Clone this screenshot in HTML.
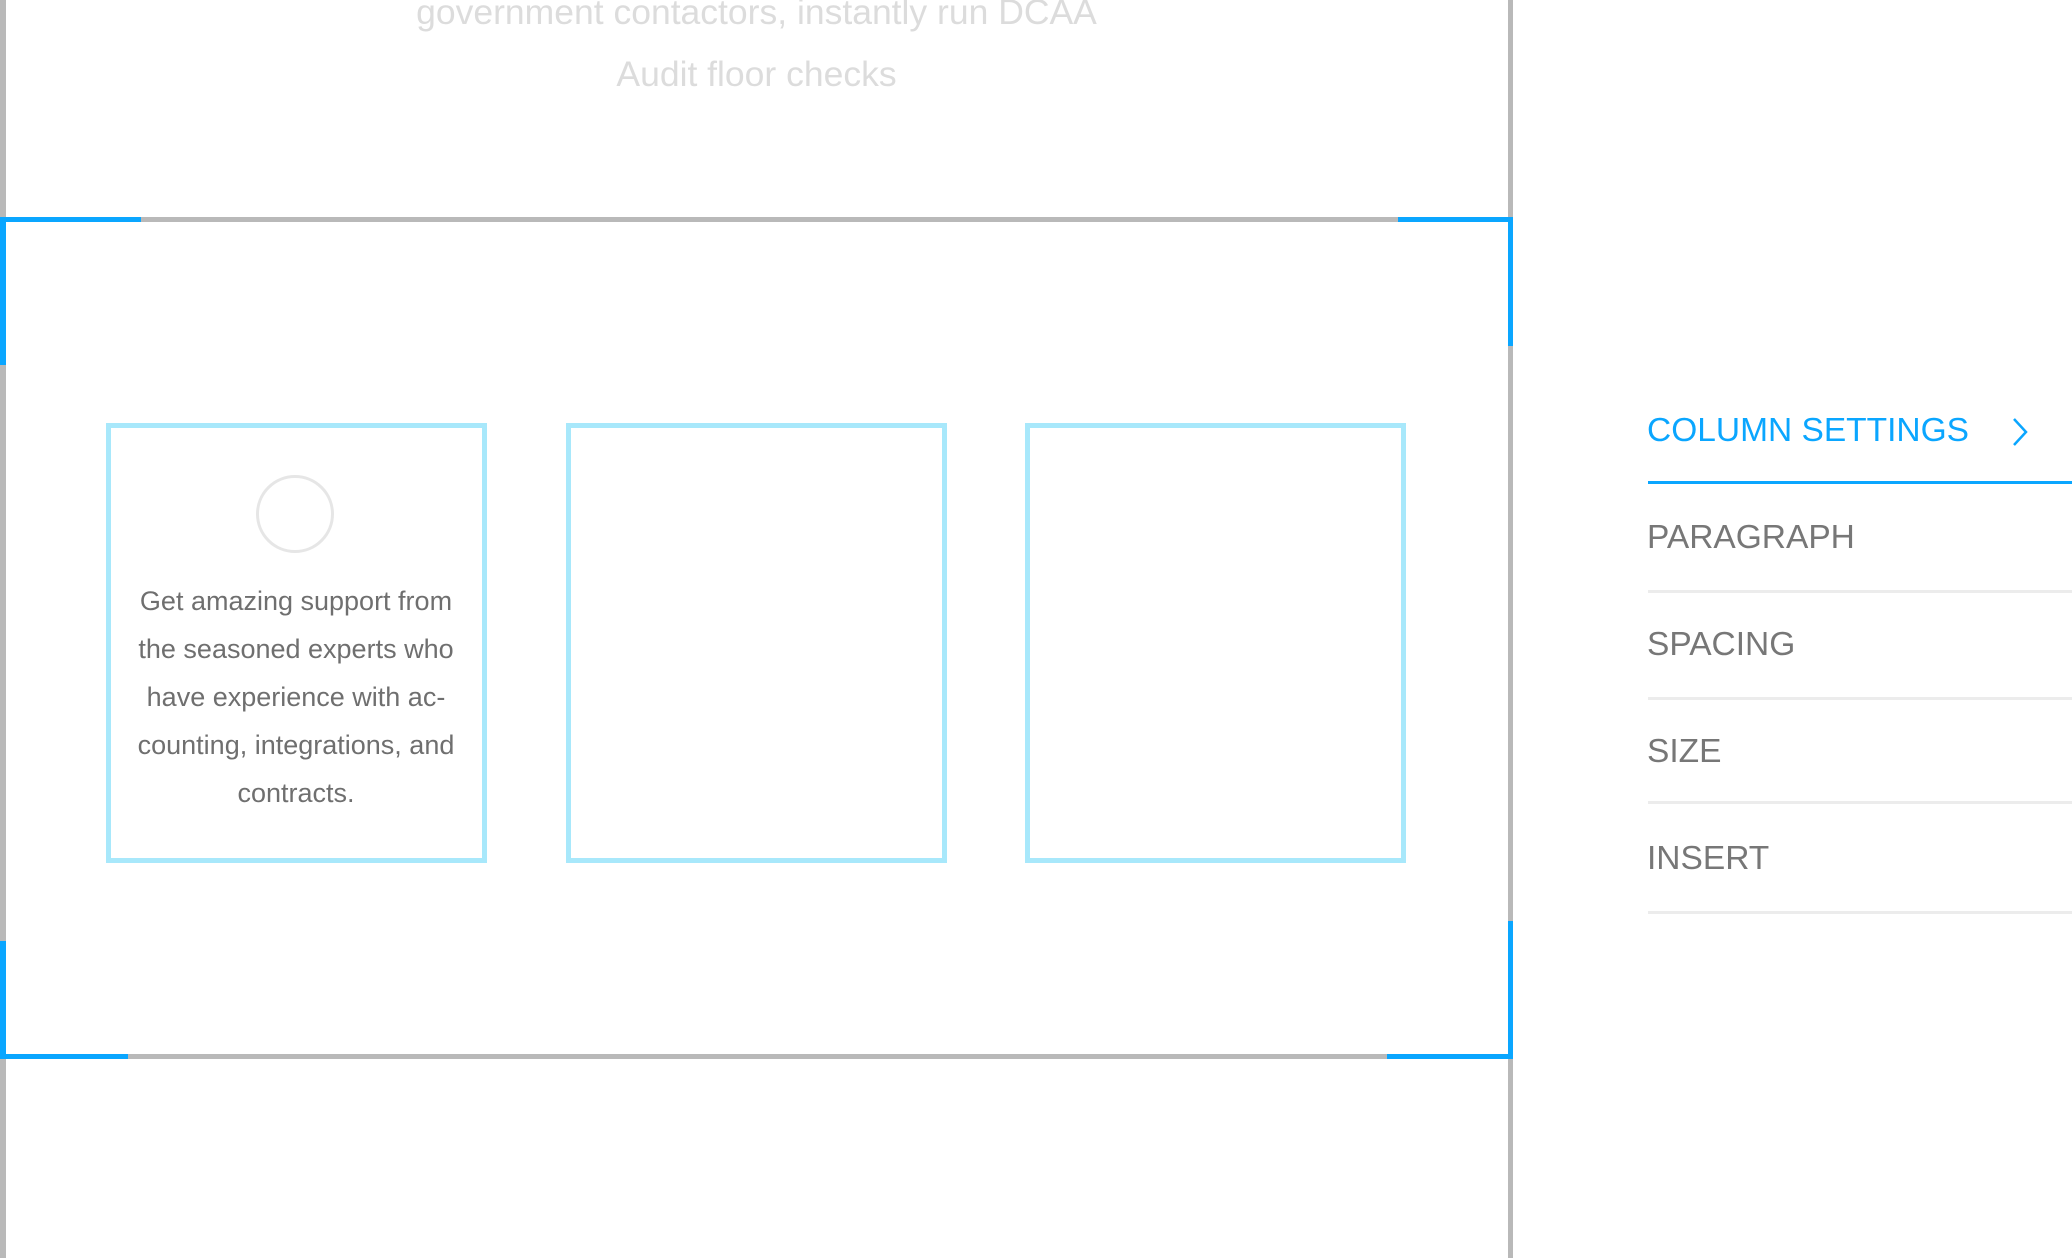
<!DOCTYPE html>
<html><head><style>
body{margin:0;width:2072px;height:1258px;background:#fff;position:relative;overflow:hidden;font-family:"Liberation Sans",sans-serif}
.a{position:absolute}
.box{position:absolute;border:5px solid #a8e8fb;box-sizing:border-box;top:423px;height:440px;width:381px}
.para{position:absolute;left:100px;width:392px;top:577px;text-align:center;font-size:27px;line-height:48px;color:#6f6f6f}
.m{position:absolute;left:1647px;font-size:33.5px;color:#777;line-height:40px}
.l{position:absolute;left:1648px;right:0;height:3px;background:#ececec}
</style></head><body>
<div class="a" style="left:0;top:-19px;width:1513px;text-align:center;font-size:35.5px;line-height:62px;color:#dcdcdc">government contactors, instantly run DCAA<br>Audit floor checks</div>
<div class="a" style="left:0;top:0;width:6px;height:1258px;background:#b9b9b9"></div>
<div class="a" style="left:1508px;top:0;width:5px;height:1258px;background:#b9b9b9"></div>
<div class="a" style="left:0;top:217px;width:1513px;height:5px;background:#b9b9b9"></div>
<div class="a" style="left:0;top:1054px;width:1513px;height:5px;background:#b9b9b9"></div>
<div class="a" style="left:0;top:217px;width:141px;height:5px;background:#0aa6ff"></div>
<div class="a" style="left:1398px;top:217px;width:115px;height:5px;background:#0aa6ff"></div>
<div class="a" style="left:0;top:1054px;width:128px;height:5px;background:#0aa6ff"></div>
<div class="a" style="left:1387px;top:1054px;width:126px;height:5px;background:#0aa6ff"></div>
<div class="a" style="left:0;top:217px;width:6px;height:148px;background:#0aa6ff"></div>
<div class="a" style="left:1508px;top:217px;width:5px;height:129px;background:#0aa6ff"></div>
<div class="a" style="left:0;top:941px;width:6px;height:118px;background:#0aa6ff"></div>
<div class="a" style="left:1508px;top:921px;width:5px;height:138px;background:#0aa6ff"></div>
<div class="box" style="left:106px"></div>
<div class="box" style="left:566px"></div>
<div class="box" style="left:1025px"></div>
<div class="a" style="left:256px;top:475px;border:3px solid #e6e6e6;border-radius:50%;box-sizing:border-box;width:78px;height:78px"></div>
<div class="para">Get amazing support from<br>the seasoned experts who<br>have experience with ac-<br>counting, integrations, and<br>contracts.</div>
<div class="m" style="top:411px;color:#0aa6ff">COLUMN SETTINGS</div>
<svg class="a" style="left:2010px;top:417px" width="20" height="30" viewBox="0 0 20 30"><path d="M4 2 L16 15 L4 28" fill="none" stroke="#0aa6ff" stroke-width="2.5"/></svg>
<div class="a" style="left:1648px;right:0;top:481px;height:3px;background:#0aa6ff"></div>
<div class="m" style="top:518px">PARAGRAPH</div>
<div class="l" style="top:590px"></div>
<div class="m" style="top:625px">SPACING</div>
<div class="l" style="top:697px"></div>
<div class="m" style="top:732px">SIZE</div>
<div class="l" style="top:801px"></div>
<div class="m" style="top:839px">INSERT</div>
<div class="l" style="top:911px"></div>
</body></html>
